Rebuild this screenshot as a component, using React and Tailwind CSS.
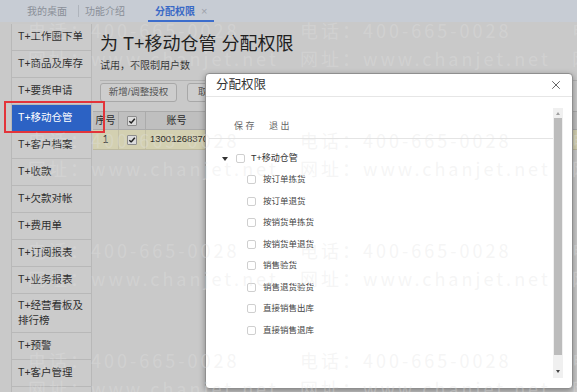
import React from 'react'
import { X } from 'lucide-react'

const menu = [
    'T+工作圈下单',
    'T+商品及库存',
    'T+要货申请',
    'T+移动仓管',
    'T+客户档案',
    'T+收款',
    'T+欠款对帐',
    'T+费用单',
    'T+订阅报表',
    'T+业务报表',
    'T+经营看板及|排行榜',
    'T+预警',
    'T+客户管理',
    '',
]

const perms = ['按订单拣货', '按订单退货', '按销货单拣货', '按销货单退货', '销售验货', '销售退货验货', '直接销售出库', '直接销售退库']

const Checked = () => (
    <span className="w-[10px] h-[10px] border border-[#8d8d8d] bg-[#dcdcdc] rounded-[1px] flex items-center justify-center">
        <svg width="8" height="8" viewBox="0 0 8 8">
            <path d="M1.3 4.2 L3.2 6 L6.8 1.8" fill="none" stroke="#222" strokeWidth="1.5" />
        </svg>
    </span>
)

const Box = () => <span className="block w-[9px] h-[9px] border border-[#cfcfcf] rounded-[2px] bg-white shrink-0" />

const App = () => {
    return (
        <div className="relative w-[577px] h-[392px] overflow-hidden bg-[#c9c9c9] font-['Liberation_Sans','Noto_Sans_CJK_SC',sans-serif] text-[#2b2b2b]">
            {/* Tabs */}
            <div className="h-[22px] bg-[#c7ccd4] flex items-center pl-[27px] text-[10px] text-[#8a8f98]">
                <span>我的桌面</span>
                <span className="ml-[11px] w-px h-[12px] bg-[#afb4bc]" />
                <span className="ml-[6px]">功能介绍</span>
                <div className="ml-[23px] h-full px-[7px] flex items-center border-b-2 border-[#3c6dcc] pt-[2px]">
                    <span className="text-[#3a69c6] font-bold">分配权限</span>
                    <span className="ml-[6px] text-[#9da2aa] text-[11px]">×</span>
                </div>
            </div>

            <div className="flex">
                {/* Sidebar */}
                <div className="ml-[11px] mt-[2px] w-[81px] border-l border-r border-[#b8b8b8] bg-[#cbcbcb]">
                    {menu.map((m, i) => (
                        <div
                            key={i}
                            className={`pl-[6px] border-b border-[#b8b8b8] text-[10.5px] flex items-center ${m.includes('|') ? 'h-[39px] leading-[15px]' : 'h-[27px]'} ${i === 3 ? 'bg-[#2c62c4] text-white' : 'text-[#2f2f2f]'}`}
                        >
                            {m.includes('|') ? (
                                <span>{m.split('|')[0]}<br />{m.split('|')[1]}</span>
                            ) : m}
                        </div>
                    ))}
                </div>

                {/* Main */}
                <div className="flex-1 pt-[10px]">
                    <div className="pl-[8px]">
                        <h1 className="text-[18px] leading-[24px] text-[#1f1f1f]">为 T+移动仓管 分配权限</h1>
                        <p className="mt-[3px] text-[10px] leading-[14px] text-[#333]">试用，不限制用户数</p>
                        <div className="mt-[7px] border-t border-[#b3b3b3]" />
                        <div className="mt-[2px] flex gap-[10px]">
                            <button className="w-[77px] h-[19px] rounded-[3px] border border-[#a8a8a8] bg-[#cdcdcd] text-[9.5px] text-[#555]">新增/调整授权</button>
                            <button className="w-[60px] h-[19px] rounded-[3px] border border-[#a8a8a8] bg-[#cdcdcd] text-[9.5px] text-[#555]">取消授权</button>
                        </div>
                    </div>
                    <div className="mt-[9px] ml-px text-[10px]">
                        <div className="flex h-[19px] bg-[#bfbfbf] border-y border-[#ababab] items-center">
                            <div className="w-[25px] text-center">序号</div>
                            <div className="w-[27px] h-full border-l border-[#ababab] flex items-center justify-center"><Checked /></div>
                            <div className="w-[62px] h-full border-l border-[#ababab] flex items-center justify-center">账号</div>
                            <div className="flex-1 h-full border-l border-[#ababab]" />
                        </div>
                        <div className="flex h-[20px] bg-[#d3d0b1] border-b border-[#bdbaa0] items-center">
                            <div className="w-[25px] text-center">1</div>
                            <div className="w-[27px] h-full border-l border-[#c2bfa5] flex items-center justify-center"><Checked /></div>
                            <div className="w-[62px] h-full border-l border-[#c2bfa5] flex items-center pl-[4px] text-[9.5px] whitespace-nowrap">13001268370</div>
                            <div className="flex-1 h-full border-l border-[#c2bfa5]" />
                        </div>
                    </div>
                </div>
            </div>

            {/* Highlight box */}
            <div className="absolute left-[4px] top-[101px] w-[101px] h-[32px] border-2 border-[#e3343a]" />

            {/* Modal */}
            <div className="absolute left-[205px] top-[73px] w-[368px] h-[316px] bg-white rounded-[4px] border border-[#8f8f8f] shadow-[0_2px_6px_rgba(0,0,0,0.35)] flex flex-col">
                <div className="h-[23px] border-b border-[#e6e6e6] flex items-center justify-between pl-[10px] pr-[9px]">
                    <span className="text-[12.5px] text-[#333]">分配权限</span>
                    <X size={14} strokeWidth={1.4} className="text-[#444]" />
                </div>
                <div className="flex-1 flex pt-[11px] pl-[3px] pr-[9px] pb-[10px]">
                    <div className="flex-1">
                        <div className="h-[31px] pt-[8px] flex items-center border-b border-[#e4e4e4] text-[9px] text-[#666] tracking-[2.5px]">
                            <span className="ml-[25px]">保存</span>
                            <span className="ml-[12px]">退出</span>
                        </div>
                        <div className="mt-[9px] h-[21px] flex items-center text-[9px] text-[#333]">
                            <span className="ml-[13px] w-0 h-0 border-l-[3px] border-r-[3px] border-t-[4px] border-l-transparent border-r-transparent border-t-[#333]" />
                            <span className="ml-[8px]"><Box /></span>
                            <span className="ml-[6px]">T+移动仓管</span>
                        </div>
                        {perms.map(p => (
                            <div key={p} className="h-[21.5px] flex items-center pl-[38px] text-[8.5px] text-[#444]">
                                <Box />
                                <span className="ml-[7px]">{p}</span>
                            </div>
                        ))}
                    </div>
                    <div className="w-[10px] flex flex-col bg-[#f0f0f0]">
                        <div className="h-[10px] flex items-center justify-center">
                            <span className="w-0 h-0 border-l-[2.5px] border-r-[2.5px] border-b-[3px] border-l-transparent border-r-transparent border-b-[#a0a0a0]" />
                        </div>
                        <div className="h-[237px] mx-px bg-[#bcbcbc]" />
                        <div className="flex-1 flex items-end justify-center pb-[5px]">
                            <span className="w-0 h-0 border-l-[2.5px] border-r-[2.5px] border-t-[3px] border-l-transparent border-r-transparent border-t-[#444]" />
                        </div>
                    </div>
                </div>
            </div>

            {/* Watermark */}
            <div className="absolute inset-0 pointer-events-none pl-[28px] pt-[16px] grid grid-cols-[repeat(3,272px)] auto-rows-[110px] font-['Noto_Sans_CJK_SC',sans-serif] text-[18px] leading-[28px] tracking-[3px] text-[rgba(226,226,226,0.32)] whitespace-nowrap">
                {Array.from({ length: 12 }).map((_, i) => (
                    <div key={i}>
                        <div>电话：400-665-0028</div>
                        <div>网址：www.chanjet.net</div>
                    </div>
                ))}
            </div>
        </div>
    )
}

export default App
